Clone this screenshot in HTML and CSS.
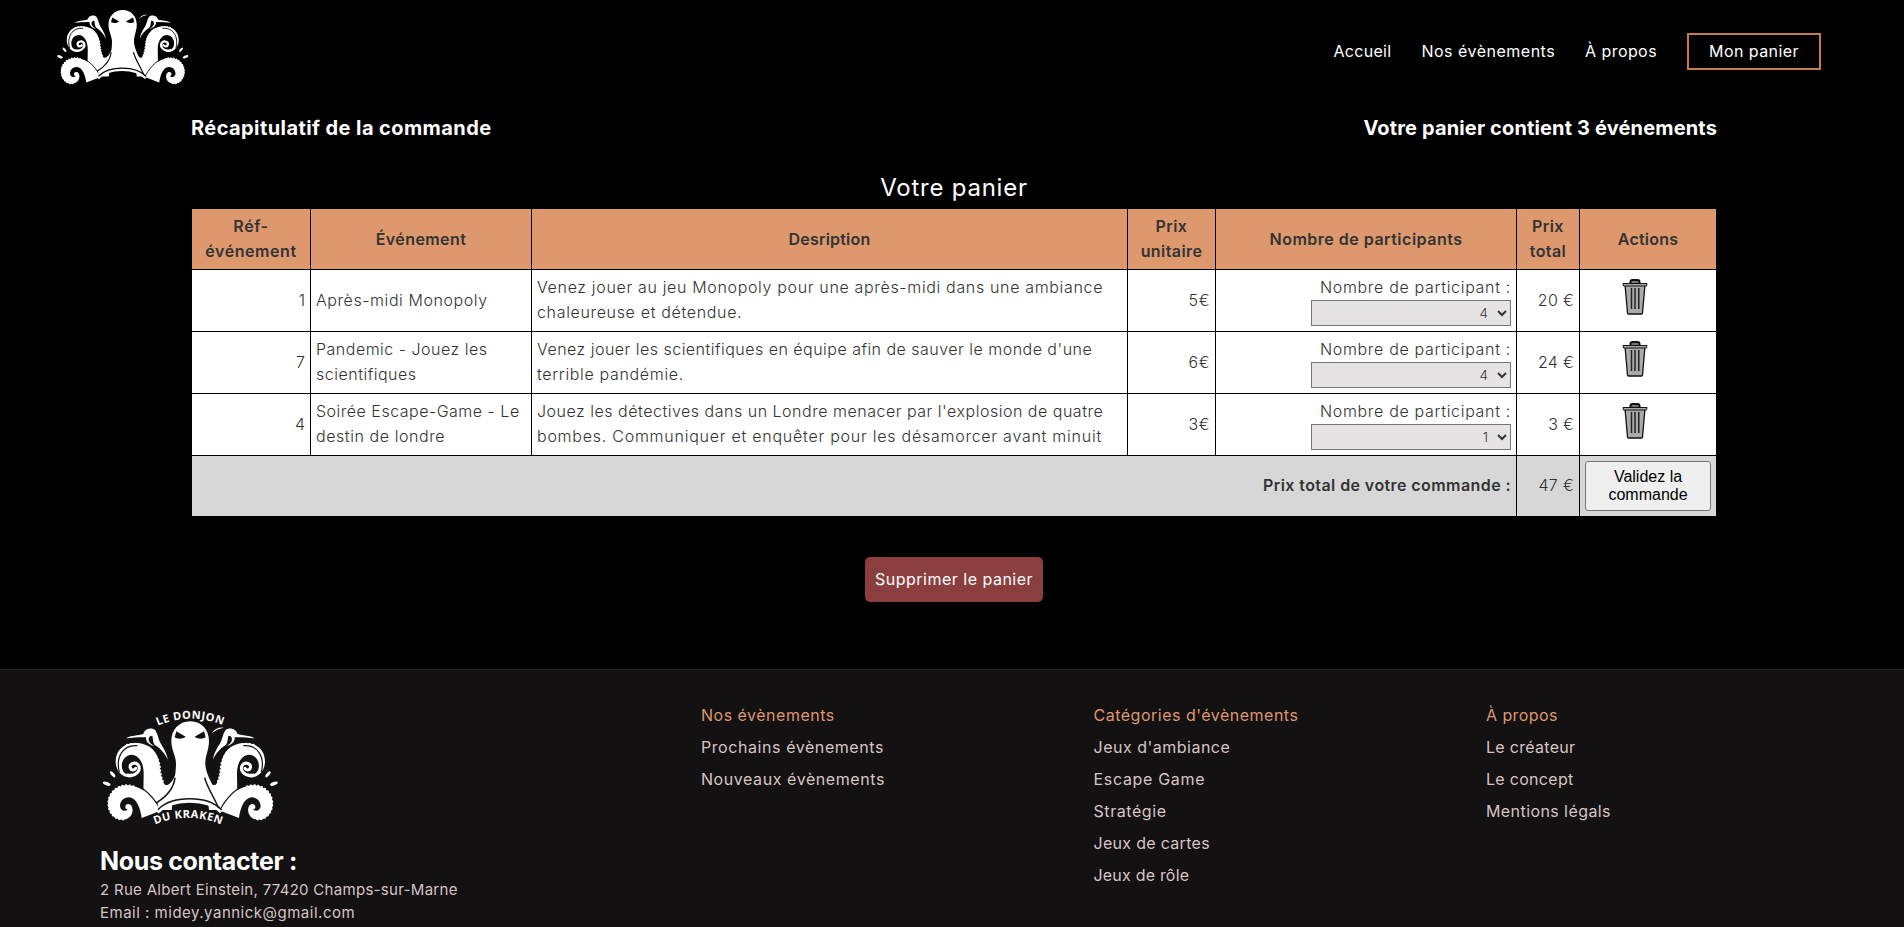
FILE: index.html
```
<!DOCTYPE html>
<html lang="fr">
<head>
<meta charset="utf-8">
<title>Le Donjon du Kraken - Mon panier</title>
<link rel="stylesheet" href="styles.css">
</head>
<body>
<svg class="defs" width="0" height="0" aria-hidden="true">
  <defs>
    <g id="arm">
      <path class="ink" d="M160 300 L161 240 C162 205 148 180 124 179 C101 181 90 205 98 226 C103 238 118 243 134 240 L124 247 C98 250 77 228 77 200 C77 165 103 142 140 144 C182 146 203 172 208 205 C211 240 216 262 226 270 C236 272 246 262 256 240 L245 345 L190 345 Z"/>
      <path class="knobs" d="M112 150 C160 138 200 170 208 210 C211 238 214 255 222 268"/>
      <path class="thick" d="M112 240 C142 246 154 222 144 209 C134 199 117 208 121 219 C124 227 133 226 137 220"/>
      <path class="gap" d="M88 232 C76 185 100 148 142 152"/>
      <path class="ink" stroke="none" d="M210 348 C188 298 150 271 110 271 C75 272 54 300 54 325 C54 355 75 376 100 374 C122 372 132 352 126 335 C121 324 108 325 106 334 C105 340 109 344 113 341 C107 353 91 347 90 333 C91 315 104 307 118 307 C140 309 151 340 155 369 Z"/>
      <path class="gap" d="M158 281 C182 297 200 322 213 346"/>
      <path class="knobs" d="M130 275 C90 262 56 290 56 325 C56 355 78 376 102 372"/>
      <path class="ink" d="M108 130 C122 121 144 122 160 117 C163 102 184 95 196 106 C204 118 205 135 213 147 C223 163 232 180 233 194 C226 176 212 161 198 152 C188 146 190 134 187 122 C176 122 174 132 178 140 C181 146 188 150 194 154 C178 151 166 140 168 127 C150 126 130 128 108 130 Z"/>
      <ellipse class="ink" cx="68" cy="238" rx="11" ry="4.5" transform="rotate(50 68 238)"/>
      <ellipse class="ink" cx="50" cy="266" rx="12" ry="5" transform="rotate(22 50 266)"/>
    </g>
    <g id="kraken">
      <use href="#arm"/>
      <use href="#arm" transform="translate(602) scale(-1 1)"/>
      <path class="ink" d="M301 79 C266 79 244 106 244 138 C244 165 257 180 258 205 C258 245 250 290 203 326 L208 350 C245 309 350 308 393 350 C388 290 345 245 346 205 C346 180 357 165 357 138 C357 106 336 79 301 79 Z"/>
      <path class="gap wide" d="M255 248 C251 282 230 305 198 324"/>
      <path class="gap wide" d="M344 248 C352 280 372 305 386 340"/>
      <path class="band" d="M203 353 C245 309 350 308 393 352"/>
      <path class="gap wide" d="M204 344 C245 301 353 300 395 345"/>
      <path class="gap fill" d="M259 109 L287 125 C276 133 262 132 254 127 Z M342 109 L314 125 C325 133 339 132 347 127 Z"/>
      <path class="ink" d="M365 115 C374 101 386 96 401 98 C386 101 376 106 365 115 Z"/>
    </g>
    <g id="bin">
      <path d="M8.500 5 V3 Q8.500 1 10.500 1 H15.500 Q17.500 1 17.500 3 V5" fill="#777" stroke="#111" stroke-width="2"/>
      <path d="M3 5.500 H23 L20.500 34 Q20.400 35 19.500 35 H6.500 Q5.600 35 5.500 34 Z" fill="#aaa" stroke="#111" stroke-width="1.300"/>
      <path d="M1 4.500 H25 L24.500 7 H1.500 Z" fill="#aaa" stroke="#111" stroke-width="1"/>
      <path d="M9.500 9 V30 M13 9 V30 M16.800 9 V30" stroke="#222" stroke-width="1.500" fill="none"/>
    </g>
  </defs>
</svg>

<header class="top">
  <a class="logo"><svg class="on-black" width="135" height="83" viewBox="30 60 540 330"><use href="#kraken"/></svg></a>
  <nav class="nav">
    <a class="s3">Accueil</a>
    <a class="s5">Nos évènements</a>
    <a class="s4">À propos</a>
    <a class="cart s4">Mon panier</a>
  </nav>
</header>

<main class="main">
  <div class="heads">
    <h2 class="s4">Récapitulatif de la commande</h2>
    <h2 class="s15">Votre panier contient 3 événements</h2>
  </div>
  <table class="basket">
    <caption class="s8">Votre panier</caption>
    <colgroup><col class="c1"><col class="c2"><col class="c3"><col class="c4"><col class="c5"><col class="c6"><col class="c7"></colgroup>
    <thead>
      <tr>
        <th class="s6">Réf-<br>événement</th>
        <th class="s4">Événement</th>
        <th class="s2">Desription</th>
        <th class="s4">Prix<br>unitaire</th>
        <th class="s5">Nombre de participants</th>
        <th class="s4">Prix<br>total</th>
        <th class="s2">Actions</th>
      </tr>
    </thead>
    <tbody>
      <tr>
        <td class="num">1</td>
        <td class="s6">Après-midi Monopoly</td>
        <td class="s66">Venez jouer au jeu Monopoly pour une après-midi dans une ambiance<br>chaleureuse et détendue.</td>
        <td class="num s6">5€</td>
        <td class="num s7"><label>Nombre de participant :</label><select class="qty"><option>4</option></select></td>
        <td class="num s3">20 €</td>
        <td class="act"><svg width="26" height="36" viewBox="0 0 26 36"><use href="#bin"/></svg></td>
      </tr>
      <tr>
        <td class="num">7</td>
        <td class="s5">Pandemic - Jouez les<br>scientifiques</td>
        <td><span class="s48">Venez jouer les scientifiques en équipe afin de sauver le monde d'une</span><br><span class="s66">terrible pandémie.</span></td>
        <td class="num s6">6€</td>
        <td class="num s7"><label>Nombre de participant :</label><select class="qty"><option>4</option></select></td>
        <td class="num s3">24 €</td>
        <td class="act"><svg width="26" height="36" viewBox="0 0 26 36"><use href="#bin"/></svg></td>
      </tr>
      <tr>
        <td class="num">4</td>
        <td><span class="s5">Soirée Escape-Game - Le</span><br><span class="s6">destin de londre</span></td>
        <td><span class="s51">Jouez les détectives dans un Londre menacer par l'explosion de quatre</span><br><span class="s75">bombes. Communiquer et enquêter pour les désamorcer avant minuit</span></td>
        <td class="num s6">3€</td>
        <td class="num s7"><label>Nombre de participant :</label><select class="qty"><option>1</option></select></td>
        <td class="num s3">3 €</td>
        <td class="act"><svg width="26" height="36" viewBox="0 0 26 36"><use href="#bin"/></svg></td>
      </tr>
    </tbody>
    <tfoot>
      <tr>
        <td class="num total s4" colspan="5">Prix total de votre commande :</td>
        <td class="num s3">47 €</td>
        <td><button class="validate">Validez la commande</button></td>
      </tr>
    </tfoot>
  </table>
  <a class="clear s5">Supprimer le panier</a>
</main>

<footer class="foot">
  <div class="contact">
    <svg class="on-foot" width="200" height="140" viewBox="0 0 600 420">
      <use href="#kraken"/>
      <path id="arcTop" d="M203 92 Q301 51 400 91" fill="none"/>
      <path id="arcBottom" d="M195 388 Q297 348 398 390" fill="none"/>
      <text class="badge"><textPath href="#arcTop" textLength="200">LE DONJON</textPath></text>
      <text class="badge"><textPath href="#arcBottom" textLength="204">DU KRAKEN</textPath></text>
    </svg>
    <h2>Nous contacter :</h2>
    <p class="s3">2 Rue Albert Einstein, 77420 Champs-sur-Marne</p>
    <p class="s5">Email : midey.yannick@gmail.com</p>
  </div>
  <ul class="links">
    <li class="s5">Nos évènements</li>
    <li class="s6">Prochains évènements</li>
    <li class="s6">Nouveaux évènements</li>
  </ul>
  <ul class="links">
    <li class="s5">Catégories d'évènements</li>
    <li class="s5">Jeux d'ambiance</li>
    <li class="s7">Escape Game</li>
    <li class="s6">Stratégie</li>
    <li class="s3">Jeux de cartes</li>
    <li class="s2">Jeux de rôle</li>
  </ul>
  <ul class="links">
    <li class="s4">À propos</li>
    <li class="s3">Le créateur</li>
    <li class="s3">Le concept</li>
    <li class="s4">Mentions légals</li>
  </ul>
</footer>
</body>
</html>
```
FILE: styles.css
```
* { box-sizing: border-box; }
html { background: #000; overflow: hidden; }
body {
  margin: 0;
  height: 927px;
  overflow: hidden;
  background: #000;
  color: #fff;
  font: 400 16px/25px Inter, "Open Sans", sans-serif;
}
h2, p, ul { margin: 0; padding: 0; }
ul { list-style: none; }
.defs { display: block; height: 0; }

/* tracking steps */
.s15 { letter-spacing: 0.15px; }
.s2 { letter-spacing: 0.2px; }
.s3 { letter-spacing: 0.3px; }
.s4 { letter-spacing: 0.42px; }
.s48 { letter-spacing: 0.48px; }
.s5 { letter-spacing: 0.5px; }
.s51 { letter-spacing: 0.51px; }
.s6 { letter-spacing: 0.57px; }
.s66 { letter-spacing: 0.66px; }
.s7 { letter-spacing: 0.68px; }
.s75 { letter-spacing: 0.75px; }
.s8 { letter-spacing: 0.76px; }

/* kraken logo */
.on-black { --back: #000; }
.on-foot { --back: #131112; }
.ink { fill: #fff; }
.knobs { fill: none; stroke: #fff; stroke-width: 8; stroke-linecap: round; stroke-dasharray: 0 11; }
.thick { fill: none; stroke: #fff; stroke-width: 9; stroke-linecap: round; }
.band { fill: none; stroke: #fff; stroke-width: 8; }
.gap { fill: none; stroke: var(--back); stroke-width: 3.5; }
.gap.wide { stroke-width: 4.5; }
.gap.fill { fill: var(--back); stroke: none; }
.badge { fill: #fff; font: 700 33px "Noto Sans", sans-serif; }

/* header */
.top {
  display: flex;
  justify-content: space-between;
  height: 103px;
  padding: 5px 83px 0 55px;
}
.logo { display: block; height: 83px; }
.nav { display: flex; gap: 30px; align-items: flex-start; padding-top: 28px; }
.nav a { line-height: 37px; }
.nav .cart {
  width: 134px;
  height: 37px;
  line-height: 33px;
  border: 2px solid #c67b4a;
  text-align: center;
}

/* basket */
.main { width: 1526px; margin-left: 191px; height: 566px; }
.heads { display: flex; justify-content: space-between; padding-top: 12px; height: 66px; }
.heads h2 { font-size: 20px; line-height: 26px; font-weight: 700; }
.basket {
  width: 1526px;
  table-layout: fixed;
  border-collapse: collapse;
  color: #333;
  font-weight: 300;
  white-space: nowrap;
}
.basket caption { height: 39px; color: #fff; font-size: 24px; font-weight: 400; line-height: 38px; }
.c1 { width: 119px; }
.c2 { width: 221px; }
.c3 { width: 596px; }
.c4 { width: 88px; }
.c5 { width: 301px; }
.c6 { width: 63px; }
.c7 { width: 137px; }
.basket th, .basket td { border: 1px solid #000; padding: 0 5px; vertical-align: middle; }
.basket th { height: 61px; background: #dd986e; font-weight: 600; text-align: center; }
.basket td { height: 62px; padding-bottom: 1px; background: #fff; }
.basket tfoot td { height: 61px; background: #d7d7d7; }
.basket .num { text-align: right; }
.basket .total { font-weight: 600; }
.basket .act { padding-left: 42px; }
.act svg { display: block; margin-bottom: 6px; }
.num label { display: block; height: 25px; }
.qty {
  display: block;
  width: 200px;
  height: 26px;
  margin: 0 0 0 auto;
  padding-right: 6px;
  border: 1px solid #767676;
  border-radius: 0;
  background-color: #e5e3e4;
  color: #333;
  font: 300 13.33px Inter, sans-serif;
  text-align: right;
}
.validate {
  display: block;
  width: 126px;
  height: 50px;
  padding: 1px 6px;
  border: 1px solid #767676;
  border-radius: 3px;
  background: #efefef;
  color: #000;
  font: 16px/18px "Liberation Sans", Arial, sans-serif;
  white-space: normal;
}
.clear {
  display: block;
  width: 178px;
  height: 45px;
  margin: 40px auto 0;
  border-radius: 5px;
  background: #8b3e3e;
  line-height: 45px;
  text-align: center;
}

/* footer */
.foot {
  display: grid;
  grid-template-columns: 601px 392.5px 392.5px 1fr;
  height: 270px;
  padding: 25px 0 0 100px;
  border-top: 1px solid #222;
  background: #131112;
  color: #d6c5c5;
}
.contact svg { display: block; margin-left: -10px; }
.contact h2 { margin-top: 10px; color: #fff; font-size: 25px; line-height: 33px; letter-spacing: -0.33px; }
.contact p { font-size: 15px; line-height: 23px; }
.links { padding-top: 4px; }
.links li { line-height: 32px; }
.links li:first-child { color: #dd986e; }
```
